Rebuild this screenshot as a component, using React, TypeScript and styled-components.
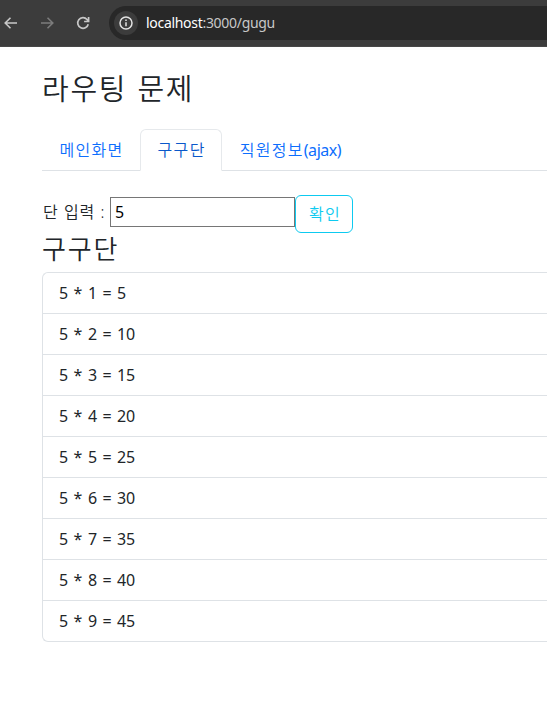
import React, { useState } from "react";
import styled, { createGlobalStyle } from "styled-components";

const GlobalStyle = createGlobalStyle`
  *, *::before, *::after { box-sizing: border-box; }
  body {
    margin: 0;
    background: #fff;
    color: #212529;
    font-family: "Noto Sans", "Noto Sans CJK KR", sans-serif;
    font-size: 16px;
    font-weight: 400;
    line-height: 24px;
  }
`;

const BrowserBar = styled.header`
  display: flex;
  align-items: center;
  height: 47px;
  padding-left: 2px;
  background: #3c3c3c;
  border-bottom: 1px solid #474747;
`;

const BarButton = styled.span<{ $dim?: boolean }>`
  display: flex;
  width: 18px;
  height: 18px;
  margin-right: 18px;
  color: ${(p) => (p.$dim ? "#7c7c7c" : "#c7c7c7")};
`;

const AddressBar = styled.div`
  display: flex;
  flex: 1;
  align-items: center;
  height: 34px;
  margin-left: -1px;
  padding-left: 5px;
  border-radius: 17px 0 0 17px;
  background: #282828;
`;

const SiteInfo = styled.span`
  display: flex;
  align-items: center;
  justify-content: center;
  width: 24px;
  height: 24px;
  margin-right: 8px;
  border-radius: 50%;
  background: #3c3c3c;
  color: #e3e3e3;
`;

const Url = styled.span`
  color: #c7c7c7;
  font: 400 14px/20px "Noto Sans", sans-serif;
  letter-spacing: -0.3px;
`;

const Host = styled.span`
  color: #fff;
`;

const Page = styled.main`
  padding: 23px 0 0 42px;
`;

const Title = styled.h1`
  margin: 0;
  font-size: 29px;
  font-weight: 350;
  line-height: 38px;
  letter-spacing: 1.7px;
  word-spacing: 1px;
`;

const Tabs = styled.nav`
  display: flex;
  height: 42px;
  margin-top: 21px;
  border-bottom: 1px solid #dee2e6;
`;

const Tab = styled.a<{ $active?: boolean }>`
  height: 42px;
  padding: 8px 15.5px 8px 16.5px;
  border: 1px solid ${(p) => (p.$active ? "#e6e9ec" : "transparent")};
  border-bottom-color: ${(p) => (p.$active ? "#fff" : "transparent")};
  border-radius: 6px 6px 0 0;
  color: ${(p) => (p.$active ? "#0a58ca" : "#0d6efd")};
  font-weight: 350;
  letter-spacing: 1.3px;
  text-decoration: none;
  white-space: nowrap;
`;

const Latin = styled.span`
  font-weight: 400;
  letter-spacing: -0.45px;
`;

const Form = styled.form`
  display: flex;
  height: 38px;
  margin-top: 24px;
`;

const Label = styled.label`
  width: 68px;
  padding: 5px 0 0 1px;
  font-weight: 350;
  letter-spacing: 1px;
  white-space: nowrap;
`;

const NumberInput = styled.input`
  width: 185px;
  height: 30px;
  margin: 2px 0 0;
  padding: 1px 2px 1px 4px;
  border: 1px solid #767676;
  outline: 0;
  background: #fff;
  color: #000;
  font: inherit;
`;

const Submit = styled.button`
  width: 58px;
  height: 38px;
  padding: 0 0 0 2px;
  border: 1px solid #0dcaf0;
  border-radius: 6px;
  background: transparent;
  color: #0dcaf0;
  font: inherit;
  font-weight: 350;
  letter-spacing: 1.3px;
`;

const SubTitle = styled.h2`
  height: 34px;
  margin: 0 0 5px;
  font-size: 26px;
  font-weight: 350;
  line-height: 32px;
  letter-spacing: 1.8px;
`;

const List = styled.ul`
  margin: 0;
  padding: 0;
  list-style: none;
  border: 1px solid #dee2e6;
  border-right: 0;
  border-radius: 6px 0 0 6px;
`;

const Item = styled.li`
  height: 41px;
  padding: 8px 16px;
  border-bottom: 1px solid #dee2e6;
  letter-spacing: -0.3px;
  word-spacing: 1.9px;

  &:last-child {
    height: 40px;
    border-bottom: 0;
  }
`;

const Arrow = ({ flip }: { flip?: boolean }) => (
  <svg width="18" height="18" viewBox="0 0 18 18" fill="none" stroke="currentColor" strokeWidth="1.6">
    <path d={flip ? "M3 9h11.5M9.5 3.7 14.8 9 9.5 14.3" : "M15 9H3.5M8.5 3.7 3.2 9l5.3 5.3"} />
  </svg>
);

const Reload = () => (
  <svg width="18" height="18" viewBox="0 0 18 18" fill="none" stroke="currentColor" strokeWidth="1.7">
    <path d="M14.2 10.2A5.3 5.3 0 1 1 13 5.5l1.2 1.3M14.6 3v4.5h-4.5" />
  </svg>
);

const Info = () => (
  <svg width="14" height="14" viewBox="0 0 14 14" fill="none" stroke="currentColor" strokeWidth="1.5">
    <circle cx="7" cy="7" r="6" />
    <path d="M7 6.2v4M7 3.6v1.5" />
  </svg>
);

export default function App() {
  const [dan, setDan] = useState("5");
  const n = Number(dan) || 0;
  return (
    <>
      <GlobalStyle />
      <BrowserBar>
        <BarButton><Arrow /></BarButton>
        <BarButton $dim><Arrow flip /></BarButton>
        <BarButton><Reload /></BarButton>
        <AddressBar>
          <SiteInfo><Info /></SiteInfo>
          <Url><Host>localhost</Host>:3000/gugu</Url>
        </AddressBar>
      </BrowserBar>
      <Page>
        <Title>라우팅 문제</Title>
        <Tabs>
          <Tab>메인화면</Tab>
          <Tab $active>구구단</Tab>
          <Tab>직원정보<Latin>(ajax)</Latin></Tab>
        </Tabs>
        <Form onSubmit={(e) => e.preventDefault()}>
          <Label htmlFor="dan">단 입력 :</Label>
          <NumberInput id="dan" value={dan} onChange={(e) => setDan(e.target.value)} />
          <Submit>확인</Submit>
        </Form>
        <SubTitle>구구단</SubTitle>
        <List>
          {Array.from({ length: 9 }, (_, i) => (
            <Item key={i}>{`${n} * ${i + 1} = ${n * (i + 1)}`}</Item>
          ))}
        </List>
      </Page>
    </>
  );
}
